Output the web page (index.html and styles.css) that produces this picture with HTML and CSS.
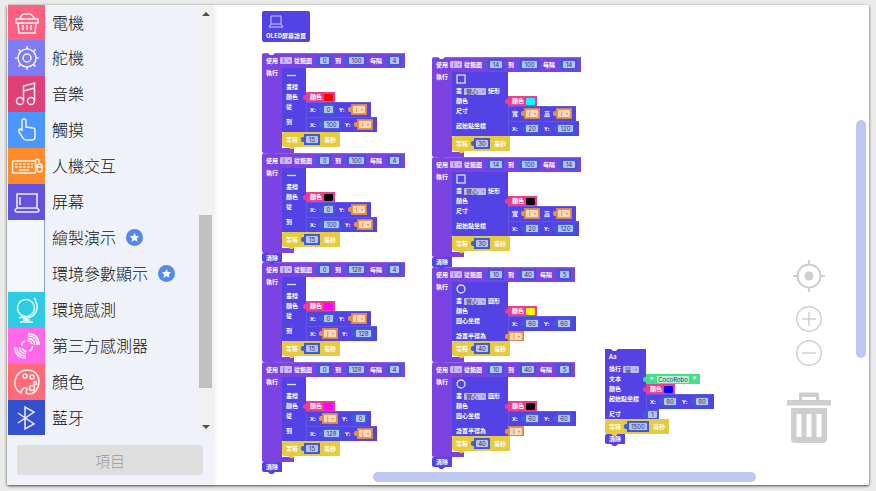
FILE: index.html
```html
<!DOCTYPE html>
<html>
<head>
<meta charset="utf-8">
<title>CocoBlockly</title>
<link rel="stylesheet" href="styles.css">
</head>
<body>
<div class="app">
  <aside class="sidebar">
    <div class="browser">
      <nav class="categories">
        <a href="#motor" class="category"><span class="tile motor"><svg viewBox="0 0 26 26"><path d="M2 9h22v4H2zM4 13l1 10h16l1-10M5 9l4-5M21 9l-4-5M9 4h8M9 15v5M13 15v5M17 15v5"/></svg></span>電機</a>
        <a href="#servo" class="category"><span class="tile servo"><svg viewBox="0 0 26 26"><circle cx="13" cy="13" r="9"/><circle cx="13" cy="13" r="4"/><path d="M13 4V1M13 22v3M4 13H1M22 13h3M6.600 6.600L4.500 4.500M19.400 6.600l2.100-2.100M6.600 19.400l-2.100 2.100M19.400 19.400l2.100 2.100"/></svg></span>舵機</a>
        <a href="#music" class="category"><span class="tile music"><svg viewBox="0 0 26 26"><circle cx="6" cy="20" r="3.500"/><circle cx="17" cy="20" r="3.500"/><path d="M9.500 20V5l11-3v18M9.500 10l11-3"/></svg></span>音樂</a>
        <a href="#touch" class="category"><span class="tile touch"><svg viewBox="0 0 26 26"><path d="M8 14V4q0-2 2-2t2 2v6l7 1q2 0 2 2v7q0 3-3 3h-6q-2 0-3-2l-4-6q-1-2 1-3 1 0 2 2z"/></svg></span>觸摸</a>
        <a href="#hmi" class="category"><span class="tile hmi"><svg class="keyboard" viewBox="0 0 32 26"><rect x="1.500" y="8" width="23" height="12" rx="1"/><path d="M4 11h18M4 14h18" stroke-dasharray="2.500 1.500"/><path d="M8 17h10M24 8q2-3 4-1v3"/><rect x="26" y="11" width="5" height="8" rx="2.500"/><path d="M26 14h5"/></svg></span>人機交互</a>
        <a href="#screen" class="category"><span class="tile screen"><svg viewBox="0 0 26 26"><path d="M3 5h20v14H3zM3 19l-2 2q0 2 2 2h20q2 0 2-2l-2-2M6 8v8"/></svg></span>屏幕</a>
        <a href="#draw-demo" class="category"><span class="tile child"></span>繪製演示<svg class="star" viewBox="0 0 17 17"><circle cx="8.500" cy="8.500" r="8.500"/><path d="M8.500 4l1.400 3 3.300.300-2.500 2.200.800 3.200-3-1.700-3 1.700.800-3.200-2.500-2.200 3.300-.300z"/></svg></a>
        <a href="#env-demo" class="category"><span class="tile child"></span>環境參數顯示<svg class="star" viewBox="0 0 17 17"><circle cx="8.500" cy="8.500" r="8.500"/><path d="M8.500 4l1.400 3 3.300.300-2.500 2.200.800 3.200-3-1.700-3 1.700.800-3.200-2.500-2.200 3.300-.300z"/></svg></a>
        <a href="#sensing" class="category"><span class="tile sensing"><svg viewBox="0 0 26 26"><circle cx="12" cy="11" r="8.500"/><path d="M20 1l2 2M21 3q5 8-1 15-6 5-13 2l-2 1M12 20v4M6 25h13M9 23h7"/></svg></span>環境感測</a>
        <a href="#third" class="category"><span class="tile third"><svg viewBox="0 0 26 26"><circle cx="13" cy="13" r="5.500" stroke-dasharray="6 2.600"/><path d="M14 5.500q6.500 0 6.500 6.500M14 3q9 0 9.200 9M14 .700q11 0 11.300 11.300M12 20.500q-6.500 0-6.500-6.500M12 23q-9 0-9.200-9M12 25.300Q1 25 .700 14"/></svg></span>第三方感測器</a>
        <a href="#colour" class="category"><span class="tile colour"><svg viewBox="0 0 26 26"><path d="M7 24Q0 20 1 12 3 1 14 1q11 1 11 12-1 12-11 12-3-1-1-4 0-3-3-2-3 2-3 5z"/><circle cx="11" cy="7" r="2"/><circle cx="18" cy="8" r="2"/><circle cx="21" cy="14" r="1.500"/><circle cx="18" cy="19" r="2.500"/></svg></span>顏色</a>
        <a href="#bluetooth" class="category"><span class="tile bluetooth"><svg viewBox="0 0 26 26"><path d="M4 8l16 11-9 5V2l9 5L4 18"/></svg></span>藍牙</a>
      </nav>
      <div class="scroller">
        <span class="arrow up"></span>
        <span class="before"></span>
        <span class="thumb"></span>
        <span class="after"></span>
        <span class="arrow down"></span>
      </div>
    </div>
    <div class="project"><button type="button" disabled>項目</button></div>
  </aside>
  <main class="workspace">
    <div id="canvas"></div>
    <div class="tools">
      <button type="button" aria-label="Center"><svg class="target" viewBox="0 0 32 32"><circle cx="16" cy="16" r="11.500"/><circle class="dot" cx="16" cy="16" r="4.500"/><path d="M16 0v5M16 27v5M0 16h5M27 16h5"/></svg></button>
      <button type="button" aria-label="Zoom in"><svg class="lens" viewBox="0 0 26 26"><circle cx="13" cy="13" r="12.300"/><path d="M6 13h14M13 6v14"/></svg></button>
      <button type="button" aria-label="Zoom out"><svg class="lens" viewBox="0 0 26 26"><circle cx="13" cy="13" r="12.300"/><path d="M6 13h14"/></svg></button>
      <button type="button" class="bin" aria-label="Delete"><svg class="trash" viewBox="0 0 46 51"><path fill-rule="evenodd" d="M1 8h12V2q0-1.500 1.500-1.500h17Q33 .500 33 2v6h12v5.500H1zM16 8h14V5H16zM5 16h36v31q0 4-4 4H9q-4 0-4-4zM10.500 22v23h5V22zM20.500 22v23h5V22zM30.500 22v23h5V22z"/></svg></button>
    </div>
    <div class="bar horizontal"></div>
    <div class="bar vertical"></div>
  </main>
</div>
<script src="blocks.js"></script>
</body>
</html>
```

FILE: styles.css
```css
* { box-sizing: border-box; }

body {
  margin: 0;
  padding: 5px 7px 6px;
  height: 100vh;
  background: #ebebeb;
  font-family: "Noto Sans CJK TC", "Noto Sans", sans-serif;
}

.app {
  display: flex;
  height: 100%;
  border-radius: 2px;
  background: #fff;
  box-shadow: 0 1px 3px #444;
}

/* sidebar */
.sidebar {
  display: flex;
  flex-direction: column;
  flex: none;
  width: 207px;
  padding-left: 1px;
  background: #eff3f9;
  box-shadow: 1px 0 3px rgba(0, 0, 0, .08);
}
.browser { display: flex; flex: 1; min-height: 0; }
.categories { flex: 1; overflow: hidden; }
.category {
  display: flex;
  align-items: center;
  height: 36px;
  padding-bottom: 2px;
  color: #111;
  font-size: 16px;
  font-weight: 300;
  line-height: 24px;
  text-decoration: none;
  white-space: nowrap;
}
.category:first-child { height: 35px; }
.tile {
  display: flex;
  align-items: center;
  justify-content: center;
  align-self: stretch;
  width: 37px;
  margin: 0 7px -2px 0;
}
.tile svg {
  width: 26px;
  height: 26px;
  fill: none;
  stroke: #fff;
  stroke-opacity: .9;
  stroke-width: 1.5;
}
.tile .keyboard { width: 32px; }
.motor { background: #ff6080; }
.servo { background: #7d7cf5; }
.music { background: #e04078; }
.touch { background: #4c97ff; }
.hmi { background: #ff8c2c; }
.screen { background: #6352dc; }
.child { background: #f4f7fd; border-right: 1px solid #8aa7e6; }
.sensing { background: #2fcbe3; }
.third { background: #ff68e6; }
.colour { background: #ff6b76; }
.bluetooth { background: #3350cf; }
.star { width: 17px; height: 17px; margin-left: 10px; fill: #5587ee; }
.star path { fill: #fff; }

.scroller {
  display: flex;
  flex-direction: column;
  width: 17px;
  padding: 0 2px;
  background: #f1f1f1;
}
.arrow { height: 17px; display: flex; align-items: center; justify-content: center; }
.arrow::before { content: ""; border: 4px solid transparent; }
.up::before { border-top: 0; border-bottom-color: #505050; }
.down::before { border-bottom: 0; border-top-color: #505050; }
.before { flex: 193; }
.thumb { flex: 173; background: #c1c1c1; }
.after { flex: 30; }

.project { padding: 10px 11px 10px 9px; }
.project button {
  width: 100%;
  height: 30px;
  border: 0;
  border-radius: 2px;
  background: #dedede;
  color: #9b9b9b;
  font: 300 15px "Noto Sans CJK TC", sans-serif;
}

/* workspace */
.workspace { position: relative; flex: 1; overflow: hidden; }
.bar { position: absolute; border-radius: 5px; background: #bcc7f3; }
.horizontal { left: 24.3%; right: 17.3%; bottom: 3px; height: 10px; }
.vertical { top: 24%; bottom: 26.5%; right: 3px; width: 10px; }
.tools {
  position: absolute;
  right: 37px;
  bottom: 42px;
  display: flex;
  flex-direction: column;
  align-items: center;
  gap: 8px;
}
.tools button { display: block; padding: 0; border: 0; background: none; }
.tools svg { display: block; fill: none; stroke: #cecece; }
.target { width: 32px; height: 32px; margin-bottom: 6px; stroke-width: 2; }
.lens { width: 26px; height: 26px; stroke-width: 1.4; }
.bin { margin-top: 18px; }
.tools .dot, .tools .trash { fill: #cecece; stroke: none; }
.trash { width: 46px; height: 51px; }

/* blocks */
.stack {
  position: absolute;
  color: #fff;
  font-size: 6px;
  font-weight: 700;
  line-height: 10px;
  white-space: nowrap;
}
.setup { left: 48px; top: 6px; }
.lines { left: 48px; top: 48px; }
.shapes { left: 218px; top: 52px; }
.words { left: 391px; top: 344px; }

.purple { background: #7d43e2; }
.violet { background: #5342e4; }
.gold { background: #e6ca3f; }
.blue { background: #405fe0; }
.orange { background: #e8954a; }
.pink { background: #e83f90; }
.green { background: #46e08c; }

.start, .step { position: relative; width: fit-content; border-radius: 2px 0 0 2px; }
.start::before, .tab::after {
  content: "";
  position: absolute;
  z-index: 1;
  left: 6px;
  width: 7px;
  height: 2px;
  clip-path: polygon(0 0, 100% 0, 70% 100%, 30% 100%);
}
.start::before { top: 0; background: #fff; }
.tab::after { top: 100%; background: inherit; }

.head {
  display: flex;
  align-items: center;
  width: fit-content;
  height: 15px;
  padding: 0 0 1px 4px;
  border-top: 1px solid rgba(255, 255, 255, .15);
  border-radius: 2px 0 0;
}
.inside { display: flex; }
.arm { width: 20px; padding-left: 4px; }
.mouth { padding-bottom: 1px; }
.foot { width: 32px; height: 5px; border-radius: 0 0 0 2px; }

.wait { display: flex; align-items: center; height: 15px; padding: 0 4px; }
.clear { width: fit-content; height: 9px; padding: 0 4px; line-height: 9px; }
.clear.end { height: 10px; }
.oled { height: 31px; padding: 4px 4px 0; border-radius: 2px; }
.oled svg { display: block; width: 16px; height: 13px; margin: 0 0 3px 2px; fill: none; stroke: #cfc9ff; }

.cell { width: var(--cell); padding-left: 4px; }
.narrow { --cell: 24px; }
.wide { --cell: 56px; }
.medium { --cell: 41px; }
.pic { display: flex; align-items: center; height: 14px; }
.medium .pic { height: 15px; }
.pic svg { display: block; width: 10px; height: 10px; fill: none; stroke: #e4e1ff; stroke-width: 1.3; }
.title { display: flex; align-items: center; height: 10px; }
.row { display: flex; }

.value { position: relative; display: flex; align-items: center; }
.value::before {
  content: "";
  position: absolute;
  left: -3px;
  top: 3px;
  width: 3px;
  height: 5px;
  border-radius: 2px 0 0 2px;
  background: inherit;
}
.num, .var { height: 11px; padding: 0 2px; margin: 0 4px 0 6px; box-shadow: inset 0 0 0 1px rgba(30, 30, 120, .12); }
.row > .num, .row > .var { height: 10px; margin: 0; }
.pair { height: 15px; padding-left: 4px; box-shadow: inset 1px 1px rgba(255, 255, 255, .1); }
.tint { height: 10px; padding: 0 2px 0 4px; }
.quote { height: 10px; padding: 0 4px; gap: 4px; }
.axis { width: 6px; font-family: "Open Sans", "Noto Sans CJK TC", sans-serif; }

input, select {
  display: block;
  height: 7px;
  margin: 0;
  padding: 0;
  border: 0;
  border-radius: 1px;
  background: rgba(255, 255, 255, .62);
  color: #30345c;
  font: 6px/7px Inter, "Noto Sans CJK TC", sans-serif;
  text-align: center;
  appearance: none;
}
.d1 { width: 9px; }
.d2 { width: 12px; }
.d3 { width: 15px; }
.d4 { width: 18px; }
.phrase { width: 32px; }
input[type="color"] { width: 9px; height: 7px; margin-left: 2px; background: none; }
input[type="color"]::-webkit-color-swatch-wrapper { padding: 0; }
input[type="color"]::-webkit-color-swatch { border: 0; border-radius: 1px; }

.pick { position: relative; }
.pick::after {
  content: "";
  position: absolute;
  right: 2px;
  top: 3px;
  border: 1px solid transparent;
  border-top: 2px solid #8763c9;
  border-bottom: 0;
}
.pick select { width: 12px; padding-left: 3px; text-align: left; }
.head .pick, .title .pick { margin: 0 2px; }
.title .pick select { width: 22px; padding-left: 2px; }
.medium .title .pick select { width: 16px; }
.orange .pick::after { border-top-color: #d98138; }
.orange select { background: #fbd9b8; color: #a3602c; }
```

FILE: blocks.js
```js
const num = n => `<span class="value num blue"><input class="d${String(n).length}" value="${n}" aria-label="數值"></span>`;
const pick = v => `<span class="pick"><select aria-label="選項"><option>${v}</option></select></span>`;
const ref = v => `<span class="value var orange">${pick(v)}</span>`;
const val = v => typeof v === "number" ? num(v) : ref(v);
const pair = (a, x, b, y) => `<span class="value pair violet"><span class="axis">${a}</span>${val(x)}<span class="axis">${b}</span>${val(y)}</span>`;
const xy = (x, y) => pair("X:", x, "Y:", y);
const tint = c => `<label class="value tint pink">顏色<input type="color" value="${c}"></label>`;
const quote = t => `<span class="value quote green">❝<input class="phrase" value="${t}" aria-label="文本">❞</span>`;

const row = (label, value) => `<div class="row"><span class="cell violet">${label}</span>${value}</div>`;
const draw = (size, pic, title, rows) => `<div class="step ${size}">
  <div class="cell violet pic">${pic}</div><div class="cell violet title">${title}</div>${rows.join("")}</div>`;
const wait = ms => `<div class="step tab wait gold">等待${num(ms)}毫秒</div>`;
const clear = end => `<div class="step tab clear violet ${end ? "end" : ""}">清除</div>`;
const loop = (v, from, to, by, body, first) => `<div class="step ${first ? "start" : ""}">
  <div class="head purple">使用${pick(v)}從範圍${num(from)}到${num(to)}每隔${num(by)}</div>
  <div class="inside"><div class="arm purple">執行</div><div class="mouth">${body}</div></div>
  <div class="step tab foot purple"></div></div>`;

const icon = shape => `<svg viewBox="0 0 10 10">${shape}</svg>`;
const dash = icon('<path d="M1 5.500h9"/>');
const square = icon('<rect x="1" y="1" width="8" height="8"/>');
const ring = icon('<circle cx="5" cy="5" r="4"/>');

const line = (c, a, b) => draw("narrow", dash, "畫線", [row("顏色", tint(c)), row("從", a), row("到", b)]) + wait(15);
const rect = c => draw("wide", square, `畫${pick("實心")}矩形`, [
  row("顏色", tint(c)), row("尺寸", pair("寬", "i", "高", "i")), row("起始點坐標", xy(20, 120))]) + wait(30);
const circle = c => draw("wide", ring, `畫${pick("實心")}圓形`, [
  row("顏色", tint(c)), row("圓心坐標", xy(60, 60)), row("設置半徑為", ref("i"))]) + wait(40);

const stacks = {
  setup: `<div class="step oled violet"><svg viewBox="0 0 16 13"><path d="M3 1h10v8H3zM3 9l-2 3h14l-2-3"/></svg>OLED屏幕設置</div>`,
  lines:
    loop("i", 0, 100, 4, line("#ff0000", xy(0, "i"), xy(100, "i")), true) +
    loop("i", 0, 100, 4, line("#000000", xy(0, "i"), xy(100, "i"))) +
    clear() +
    loop("j", 0, 128, 4, line("#ff00ff", xy(0, "j"), xy("j", 128))) +
    loop("j", 0, 128, 4, line("#ff00ff", xy("j", 0), xy(128, "j"))) +
    clear(true),
  shapes:
    loop("i", 14, 100, 14, rect("#00ffff"), true) +
    loop("i", 14, 100, 14, rect("#000000")) +
    clear(true) +
    loop("i", 10, 40, 5, circle("#ffff00")) +
    loop("i", 10, 40, 5, circle("#000000")) +
    clear(true),
  words:
    `<div class="start">${draw("medium", "Aa", `換行${pick("是")}`, [
      row("文本", quote("CocoRobo")), row("顏色", tint("#0000ff")),
      row("起始點坐標", xy(80, 80)), row("尺寸", num(1))])}</div>` +
    wait(1500) + clear(true)
};

document.getElementById("canvas").innerHTML = Object.entries(stacks)
  .map(([name, html]) => `<section class="stack ${name}">${html}</section>`).join("");
```
